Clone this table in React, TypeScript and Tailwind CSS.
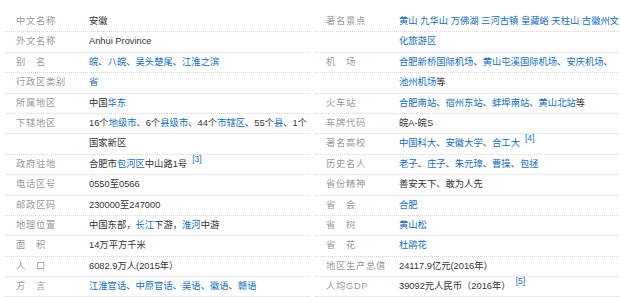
import React from 'react';

type Row = { label?: React.ReactNode; value: React.ReactNode };

const A = ({ children }: { children: React.ReactNode }) => (
  <a className="text-[#136ec2] no-underline">{children}</a>
);

const Sup = ({ n }: { n: number }) => (
  <sup className="text-[#136ec2] text-[8.5px] ml-[5px] -top-[5px]">[{n}]</sup>
);

// two-character labels are spread out like "别    名"
const Two = ({ a, b }: { a: string; b: string }) => (
  <>
    {a}
    <span className="inline-block w-[10px]" />
    {b}
  </>
);

const left: Row[] = [
  { label: '中文名称', value: '安徽' },
  { label: '外文名称', value: 'Anhui Province' },
  {
    label: <Two a="别" b="名" />,
    value: (
      <>
        <A>皖</A>、<A>八皖</A>、<A>吴头楚尾</A>、<A>江淮之滨</A>
      </>
    ),
  },
  { label: '行政区类别', value: <A>省</A> },
  {
    label: '所属地区',
    value: (
      <>
        中国<A>华东</A>
      </>
    ),
  },
  {
    label: '下辖地区',
    value: (
      <>
        16个<A>地级市</A>、6个<A>县级市</A>、44个<A>市辖区</A>、55个<A>县</A>、1个
      </>
    ),
  },
  { value: '国家新区' },
  {
    label: '政府驻地',
    value: (
      <>
        合肥市<A>包河区</A>中山路1号
        <Sup n={3} />
      </>
    ),
  },
  { label: '电话区号', value: '0550至0566' },
  { label: '邮政区码', value: '230000至247000' },
  {
    label: '地理位置',
    value: (
      <>
        中国东部，<A>长江</A>下游，<A>淮河</A>中游
      </>
    ),
  },
  { label: <Two a="面" b="积" />, value: '14万平方千米' },
  { label: <Two a="人" b="口" />, value: '6082.9万人(2015年）' },
  {
    label: <Two a="方" b="言" />,
    value: (
      <>
        <A>江淮官话</A>、<A>中原官话</A>、<A>吴语</A>、<A>徽语</A>、<A>赣语</A>
      </>
    ),
  },
];

const right: Row[] = [
  {
    label: '著名景点',
    value: <A>黄山 九华山 万佛湖 三河古镇 皇藏峪 天柱山 古徽州文</A>,
  },
  { value: <A>化旅游区</A> },
  {
    label: <Two a="机" b="场" />,
    value: (
      <>
        <A>合肥新桥国际机场</A>、<A>黄山屯溪国际机场</A>、<A>安庆机场</A>、
      </>
    ),
  },
  {
    value: (
      <>
        <A>池州机场</A>等
      </>
    ),
  },
  {
    label: '火车站',
    value: (
      <>
        <A>合肥南站</A>、<A>宿州东站</A>、<A>蚌埠南站</A>、<A>黄山北站</A>等
      </>
    ),
  },
  { label: '车牌代码', value: '皖A-皖S' },
  {
    label: '著名高校',
    value: (
      <>
        <A>中国科大</A>、<A>安徽大学</A>、<A>合工大</A>
        <Sup n={4} />
      </>
    ),
  },
  {
    label: '历史名人',
    value: (
      <>
        <A>老子</A>、<A>庄子</A>、<A>朱元璋</A>、<A>曹操</A>、<A>包拯</A>
      </>
    ),
  },
  { label: '省份精神', value: '善安天下、敢为人先' },
  { label: <Two a="省" b="会" />, value: <A>合肥</A> },
  { label: <Two a="省" b="树" />, value: <A>黄山松</A> },
  { label: <Two a="省" b="花" />, value: <A>杜鹃花</A> },
  { label: '地区生产总值', value: '24117.9亿元(2016年）' },
  {
    label: '人均GDP',
    value: (
      <>
        39092元人民币（2016年）
        <Sup n={5} />
      </>
    ),
  },
];

function InfoColumn({ rows, className }: { rows: Row[]; className: string }) {
  return (
    <div className={className}>
      {rows.map((r, i) => (
        <div
          key={i}
          className="flex items-stretch h-[20.4px] border-b border-dotted border-[#d6d6d6]"
        >
          <div className="w-[84px] shrink-0 pl-[11px] flex items-center text-[#999] tracking-[0.7px] whitespace-nowrap">
            <span>{r.label}</span>
          </div>
          <div className="flex-1 min-w-0 flex items-center whitespace-nowrap overflow-hidden text-[#333]">
            <span>{r.value}</span>
          </div>
        </div>
      ))}
    </div>
  );
}

export default function App() {
  return (
    <div className="w-[620px] h-[297px] overflow-hidden bg-white pt-[12px] font-['Liberation_Sans','Noto_Sans_CJK_SC',sans-serif] text-[9.3px] leading-none">
      <div className="flex">
        <InfoColumn rows={left} className="ml-[5px] w-[305px] shrink-0" />
        <InfoColumn rows={right} className="ml-[5px] w-[320px] shrink-0" />
      </div>
    </div>
  );
}
